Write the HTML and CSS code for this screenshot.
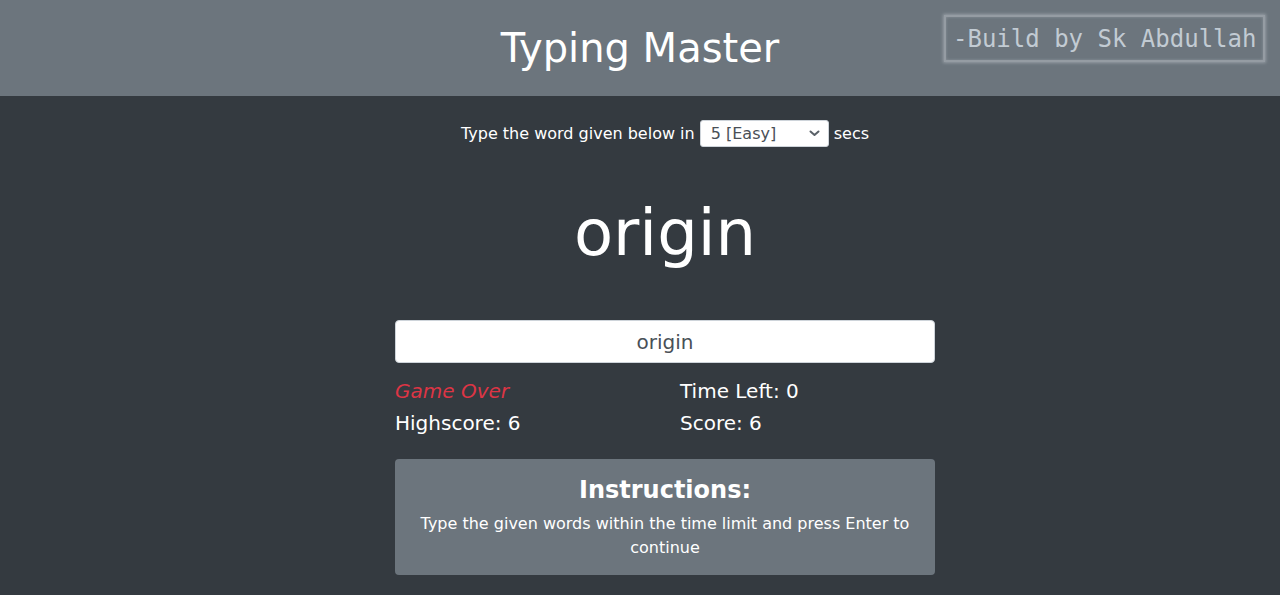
FILE: index.html
```html
<!DOCTYPE html>
<html>
<head>
<meta charset="utf-8">
<link rel="stylesheet" href="styles.css">
</head>
<body>
<header class="top">
  <h1 class="title">Typing Master</h1>
  <div class="badge">-Build by Sk Abdullah</div>
</header>
<main class="main">
  <p class="lead">Type the word given below in
    <span class="select">5 [Easy]<svg class="chev" width="11" height="7" viewBox="0 0 11 7"><path d="M1.5 1.5 L5.5 5 L9.5 1.5" fill="none" stroke="#5a6168" stroke-width="2" stroke-linecap="round" stroke-linejoin="round"/></svg></span>
    secs</p>
  <h2 class="word">origin</h2>
  <div class="input">origin</div>
  <div class="stats">
    <div class="over">Game Over</div>
    <div>Time Left: 0</div>
    <div>Highscore: 6</div>
    <div>Score: 6</div>
  </div>
  <div class="card">
    <h3 class="card-title">Instructions:</h3>
    <p class="card-text">Type the given words within the time limit and press Enter to continue</p>
  </div>
</main>
</body>
</html>
```

FILE: styles.css
```css
* { box-sizing: border-box; }
html, body { margin: 0; padding: 0; }
body {
  background: #343a40;
  color: #fff;
  font-family: "DejaVu Sans", sans-serif;
  font-size: 16px;
  line-height: 1.5;
  height: 595px;
  overflow: hidden;
}
.top {
  position: relative;
  background: #6c757d;
  height: 96px;
  display: flex;
  align-items: center;
  justify-content: center;
}
.title {
  margin: 0;
  font-size: 40px;
  font-weight: 400;
  line-height: 1.2;
  padding-bottom: 1px;
}
.badge {
  position: absolute;
  top: 15px;
  right: 15px;
  width: 321px;
  height: 47px;
  border: 2px solid #959ca3;
  box-shadow: 0 0 3px 1px rgba(200,206,212,0.45), inset 0 0 3px rgba(200,206,212,0.35);
  font-family: "DejaVu Sans Mono", monospace;
  font-size: 24px;
  color: #c2cbd3;
  display: flex;
  align-items: center;
  padding-left: 7px;
  white-space: nowrap;
}
.main {
  width: 540px;
  margin-left: 395px;
  display: flex;
  flex-direction: column;
  align-items: stretch;
}
.lead {
  margin: 24px -100px 0;
  font-size: 16px;
  white-space: nowrap;
  height: 27px;
  display: flex;
  align-items: center;
  justify-content: center;
  gap: 5px;
}
.select {
  display: inline-flex;
  align-items: center;
  justify-content: space-between;
  width: 129px;
  height: 27px;
  background: #fff;
  color: #495057;
  border: 1px solid #ced4da;
  border-radius: 3px;
  padding: 0 8px 0 10px;
  font-size: 16px;
}
.word {
  margin: 48px 0 0;
  text-align: center;
  font-size: 64px;
  font-weight: 400;
  line-height: 1.2;
  height: 77px;
}
.input {
  margin-top: 48px;
  height: 43px;
  background: #fff;
  border: 1px solid #ced4da;
  border-radius: 4px;
  color: #495057;
  font-size: 20px;
  display: flex;
  align-items: center;
  justify-content: center;
}
.stats {
  margin: 12px -15px 0;
  display: grid;
  grid-template-columns: 1fr 1fr;
  font-size: 20px;
  line-height: 32px;
}
.stats > div { padding: 0 15px; }
.over { color: #dc3545; font-style: italic; }
.card {
  margin-top: 20px;
  background: #6c757d;
  border-radius: 4px;
  height: 116px;
  padding: 17px 20px 0;
  text-align: center;
}
.card-title {
  margin: 0 0 7px;
  font-size: 24px;
  font-weight: 700;
  line-height: 1.2;
}
.card-text {
  margin: 0;
  font-size: 16px;
  line-height: 24px;
}
```
